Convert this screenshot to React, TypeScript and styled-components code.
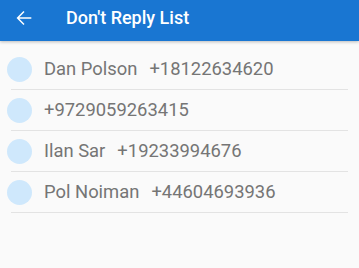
import styled, { createGlobalStyle } from 'styled-components';

const GlobalStyle = createGlobalStyle`
  html, body {
    margin: 0;
    padding: 0;
    background: #fafafa;
    font-family: Roboto, "Noto Sans", sans-serif;
  }
`

const contacts = [
  { name: 'Dan Polson', phone: '+18122634620' },
  { name: '', phone: '+9729059263415' },
  { name: 'Ilan Sar', phone: '+19233994676' },
  { name: 'Pol Noiman', phone: '+44604693936' },
]

const BackArrow = () => (
  <svg width="22" height="22" viewBox="0 0 24 24" fill="none" stroke="#fff" strokeWidth="1.6">
    <path d="M20 12H5M12 5l-7 7 7 7" />
  </svg>
)

const App = () => {
  return (
    <>
      <GlobalStyle />
      <Page>
        <Toolbar>
          <BackButton>
            <BackArrow />
          </BackButton>
          <Title>Don't Reply List</Title>
        </Toolbar>
        <List>
          {contacts.map(({ name, phone }) => (
            <Row key={phone}>
              <Avatar />
              <Label>
                {name && <span>{name}</span>}
                <span>{phone}</span>
              </Label>
            </Row>
          ))}
        </List>
      </Page>
    </>
  )
}

const Page = styled.div`
  width: 359px;
  height: 268px;
  background: #fafafa;
  overflow: hidden;
`

const Toolbar = styled.div`
  height: 41px;
  background: #1976d2;
  display: flex;
  align-items: center;
  box-shadow: 0 1px 3px rgba(0, 0, 0, 0.25);
  position: relative;
  z-index: 1;
`

const BackButton = styled.div`
  width: 22px;
  height: 22px;
  margin: 0 0 6px 13px;
  display: flex;
  svg {
    display: block;
  }
`

const Title = styled.h1`
  margin: 0 0 0 31px;
  color: #fff;
  font-size: 18px;
  font-weight: 500;
  line-height: 1;
  padding-bottom: 6px;
`

const List = styled.div`
  display: flex;
  flex-direction: column;
  padding-top: 8px;
`

const Row = styled.div`
  height: 40px;
  display: flex;
  align-items: center;
  margin-left: 7px;
  position: relative;
  border-bottom: 1px solid transparent;
  &::after {
    content: '';
    position: absolute;
    left: 4px;
    right: 11px;
    bottom: -1px;
    height: 1px;
    background: #e3e3e3;
  }
`

const Avatar = styled.div`
  width: 25px;
  height: 25px;
  border-radius: 50%;
  background: #cfe8fc;
  flex-shrink: 0;
`

const Label = styled.div`
  margin-left: 12px;
  display: flex;
  gap: 12px;
  font-size: 18.4px;
  color: #757575;
  line-height: 1;
`

export default App
